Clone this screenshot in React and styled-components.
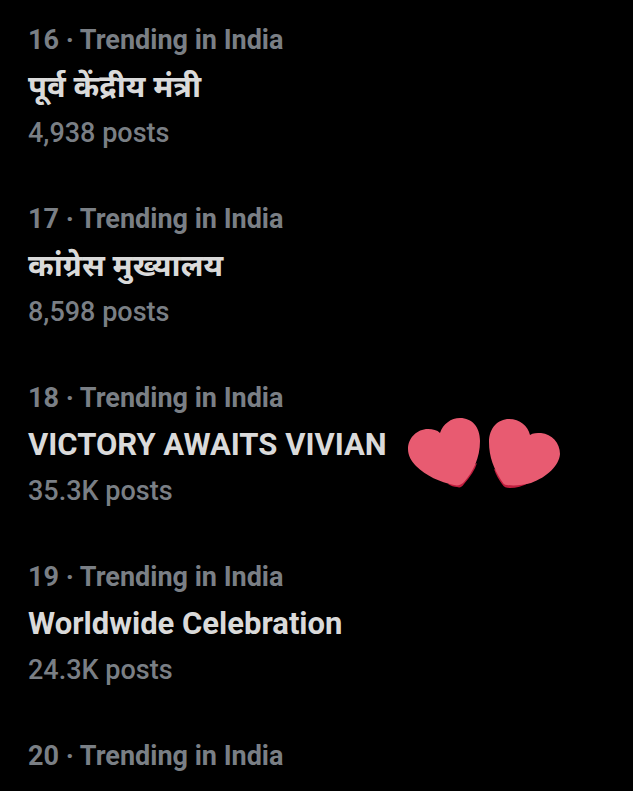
import React from 'react';
import styled, { createGlobalStyle } from 'styled-components';

const GlobalStyle = createGlobalStyle`
  body {
    margin: 0;
    background: #000;
    font-family: Roboto, 'Noto Sans', 'Noto Sans Devanagari', sans-serif;
  }
`;

const TrendList = styled.main`
  display: flex;
  flex-direction: column;
  gap: 54px;
  padding: 24px 28px 18px;
`;

const Meta = styled.div`
  font-size: 27px;
  line-height: 32px;
  font-weight: ${props => (props.$bold ? 700 : 500)};
  color: #7a7f85;
`;

const Title = styled.h2`
  display: flex;
  align-items: center;
  gap: 21px;
  margin: 0;
  min-height: 61px;
  font-size: 31px;
  line-height: 40px;
  font-weight: 700;
  color: #dadada;
`;

const HeartsIcon = styled.svg`
  flex: none;
  width: 153px;
  height: 71px;
  margin: 4px 0 -14px;
`;

const Hearts = () => (
  <HeartsIcon viewBox="0 0 153 71" aria-hidden="true">
    <g fill="#bf1e3e">
      <path d="M69 45C67 52 62 59 56 66C54 69 52 70 49 69C46 69 43 68 40 66Z" />
      <path d="M86 51C88 57 91 62 94 66C96 69 98 70 102 70C108 70 115 68 121 65Z" />
    </g>
    <g fill="#e85b71">
      <path d="M32 15C35 6 43 0 52 0C64 0 72 9 72 23C72 40 65 54 56 64C53 67 50 68 46 67C32 64 18 58 8 48C3 43 0 37 0 31C0 20 9 11 20 11C25 11 29 12 32 15Z" />
      <path d="M122 17C125 15 129 15 133 15C144 16 152 25 152 36C151 48 139 59 123 65C115 67 107 68 99 67C96 67 95 65 93 62C86 51 81 39 81 24C81 10 90 1 101 1C112 1 120 8 122 17Z" />
    </g>
  </HeartsIcon>
);

const trends = [
  { rank: 16, title: 'पूर्व केंद्रीय मंत्री', posts: '4,938' },
  { rank: 17, title: 'कांग्रेस मुख्यालय', posts: '8,598' },
  { rank: 18, title: 'VICTORY AWAITS VIVIAN', posts: '35.3K', hearts: true },
  { rank: 19, title: 'Worldwide Celebration', posts: '24.3K' },
  { rank: 20 },
];

const Trend = ({ rank, title, posts, hearts }) => (
  <article>
    <Meta $bold>{rank} · Trending in India</Meta>
    {title && (
      <Title>
        {title}
        {hearts && <Hearts />}
      </Title>
    )}
    {posts && <Meta>{posts} posts</Meta>}
  </article>
);

const App = () => (
  <>
    <GlobalStyle />
    <TrendList>
      {trends.map(trend => (
        <Trend key={trend.rank} {...trend} />
      ))}
    </TrendList>
  </>
);

export default App;
